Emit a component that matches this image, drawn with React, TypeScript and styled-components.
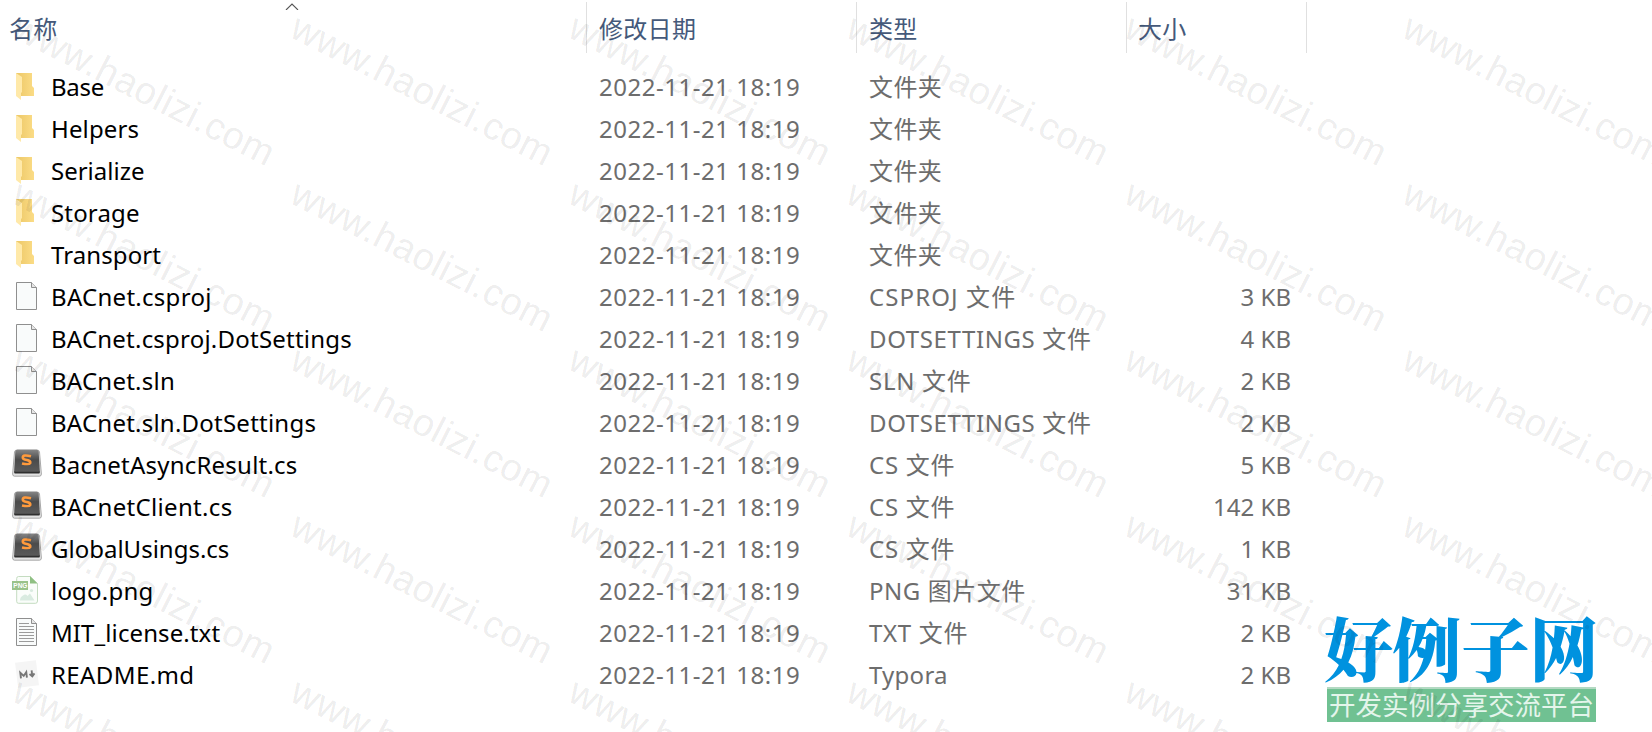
import React from "react";
import styled, { createGlobalStyle } from "styled-components";

type Kind = "folder" | "blank" | "sublime" | "png" | "txt" | "md";

type FileItem = {
  name: string;
  kind: Kind;
  type: string;
  size?: string;
  spacing?: number;
  typeSpacing?: number;
};

const DATE = "2022-11-21 18:19";

const FILES: FileItem[] = [
  { name: "Base", kind: "folder", type: "文件夹", spacing: -0.25, typeSpacing: 0.4 },
  { name: "Helpers", kind: "folder", type: "文件夹", spacing: 0.15, typeSpacing: 0.4 },
  { name: "Serialize", kind: "folder", type: "文件夹", typeSpacing: 0.4 },
  { name: "Storage", kind: "folder", type: "文件夹", spacing: 0.15, typeSpacing: 0.4 },
  { name: "Transport", kind: "folder", type: "文件夹", spacing: 0.1, typeSpacing: 0.4 },
  { name: "BACnet.csproj", kind: "blank", type: "CSPROJ 文件", size: "3 KB", spacing: 0.28, typeSpacing: 1.1 },
  { name: "BACnet.csproj.DotSettings", kind: "blank", type: "DOTSETTINGS 文件", size: "4 KB", spacing: 0.22, typeSpacing: 0.62 },
  { name: "BACnet.sln", kind: "blank", type: "SLN 文件", size: "2 KB", spacing: 0.24, typeSpacing: 0.7 },
  { name: "BACnet.sln.DotSettings", kind: "blank", type: "DOTSETTINGS 文件", size: "2 KB", spacing: 0.23, typeSpacing: 0.62 },
  { name: "BacnetAsyncResult.cs", kind: "sublime", type: "CS 文件", size: "5 KB", spacing: 0.22, typeSpacing: 0.75 },
  { name: "BACnetClient.cs", kind: "sublime", type: "CS 文件", size: "142 KB", spacing: 0.32, typeSpacing: 0.75 },
  { name: "GlobalUsings.cs", kind: "sublime", type: "CS 文件", size: "1 KB", typeSpacing: 0.75 },
  { name: "logo.png", kind: "png", type: "PNG 图片文件", size: "31 KB", spacing: 0.2, typeSpacing: 0.55 },
  { name: "MIT_license.txt", kind: "txt", type: "TXT 文件", size: "2 KB", spacing: 0.1, typeSpacing: 0.7 },
  { name: "README.md", kind: "md", type: "Typora", size: "2 KB", spacing: 0.4, typeSpacing: 0.25 },
];

// watermark tiles: 6 columns x 5 rows
const TILES = Array.from({ length: 30 }, (_, i) => i);

export default function App() {
  return (
    <Window>
      <GlobalStyle />
      <Header>
        <HeadCell $left={9}>
          名称
          <SortArrow width="14" height="8" viewBox="0 0 14 8">
            <path d="M1 8 L7 2 L13 8" fill="none" stroke="#555" strokeWidth="1.1" />
          </SortArrow>
        </HeadCell>
        <HeadCell $left={13}>修改日期</HeadCell>
        <HeadCell $left={13}>类型</HeadCell>
        <HeadCell $left={12}>大小</HeadCell>
      </Header>
      <List>
        {FILES.map((file) => (
          <Row key={file.name}>
            <NameCell>
              <IconBox>
                <FileIcon kind={file.kind} />
              </IconBox>
              <Name $spacing={file.spacing ?? 0}>{file.name}</Name>
            </NameCell>
            <Cell $spacing={0.53}>{DATE}</Cell>
            <Cell $spacing={file.typeSpacing ?? 0}>{file.type}</Cell>
            <SizeCell>{file.size}</SizeCell>
          </Row>
        ))}
      </List>
      <SiteLogo>
        <LogoTitle>好例子网</LogoTitle>
        <LogoBar>开发实例分享交流平台</LogoBar>
      </SiteLogo>
      <Watermark>
        {TILES.map((i) => (
          <Tile key={i}>
            <Mark>www.haolizi.com</Mark>
          </Tile>
        ))}
      </Watermark>
    </Window>
  );
}

function FileIcon({ kind }: { kind: Kind }) {
  switch (kind) {
    case "folder":
      return (
        <svg width="30" height="30" viewBox="0 0 30 30">
          <defs>
            <linearGradient id="folderBack" x1="0" x2="1">
              <stop offset="0" stopColor="#ecc766" />
              <stop offset="1" stopColor="#fbdc86" />
            </linearGradient>
          </defs>
          <path d="M4 2H20V15L22 17V25H4Z" fill="url(#folderBack)" />
          <path d="M4 2L10 6V21L9 22V29L4 25Z" fill="#ffe9a9" />
        </svg>
      );
    case "blank":
    case "txt":
      return (
        <svg width="30" height="30" viewBox="0 0 30 30">
          <path d="M4.5 1.5H19.5L24.5 6.5V28.5H4.5Z" fill="#f9fbfb" stroke="#8f8f8f" />
          <path d="M19.5 1.5V6.5H24.5" fill="#e6e6e6" stroke="#8f8f8f" />
          {kind === "txt" && (
            <path
              d="M7 6.5H17M7 9.5H22M7 12.5H22M7 15.5H22M7 18.5H22M7 21.5H22M7 24.5H22"
              stroke="#9b9b9b"
            />
          )}
        </svg>
      );
    case "sublime":
      return (
        <svg width="30" height="30" viewBox="0 0 30 30">
          <defs>
            <linearGradient id="keyCap" x1="0" x2="0" y1="0" y2="1">
              <stop offset="0" stopColor="#858585" />
              <stop offset="0.45" stopColor="#4b4b4b" />
              <stop offset="1" stopColor="#5a5a5a" />
            </linearGradient>
          </defs>
          <path
            d="M2.5 3Q2.8 1 5 1H25Q27.2 1 27.5 3L29.4 25Q29.4 27.2 27.5 27.2H2.5Q.6 27.2 .6 25Z"
            fill="#e2e2e2"
            stroke="#969696"
            strokeWidth=".8"
          />
          <path d="M2.2 22H27.8V23.4Q27.800 24.600 26 24.600H4Q2.200 24.600 2.200 23.400Z" fill="#2f2f2f" />
          <path d="M3.300 2.600Q3.500.800 5.300.800H24.700Q26.500.800 26.700 2.600L27.800 21.500Q27.800 22.800 26 22.800H4Q2.200 22.800 2.200 21.500Z" fill="url(#keyCap)" />
          <path
            d="M19 7.300Q10.800 5.300 10.800 8.400Q10.800 10.400 14.800 11Q18.800 11.800 18.300 13.900Q17.300 16 10 14.400"
            fill="none"
            stroke="#ff9a3c"
            strokeWidth="2.600"
          />
        </svg>
      );
    case "png":
      return (
        <svg width="30" height="30" viewBox="0 0 30 30">
          <path d="M6.500 1.500H18L25.500 8.500V26Q25.500 28.300 23.500 28.300H6.500Q4.700 28.300 4.700 26.500V3.500Q4.700 1.500 6.500 1.500Z" fill="#fafdfa" stroke="#c4dcc0" />
          <path d="M18 1L25.500 8.500H18Z" fill="#8fc083" />
          <path d="M8 25.500Q8 22 11 20.500Q13.500 18.500 15.500 21L18 18.500L22.500 25.500Z" fill="#d9ebe0" />
          <circle cx="19.500" cy="15.500" r="1.600" fill="#d9ebe0" />
          <rect y="6" width="16" height="9" fill="#9ac28a" />
          <PngText x="1.300" y="13">PNG</PngText>
        </svg>
      );
    case "md":
      return (
        <svg width="30" height="30" viewBox="0 0 30 30">
          <g transform="rotate(-7 15 15)">
            <rect x="4.500" y="2.500" width="21" height="25" fill="#f5f5f5" />
            <path d="M8.500 18.500V13L11.500 16.500L14.500 13V18.500" fill="none" stroke="#777" strokeWidth="1.900" />
            <path d="M20 12V17.500M17.500 15.300L20 18L22.500 15.300" fill="none" stroke="#777" strokeWidth="1.900" />
          </g>
        </svg>
      );
  }
}

const GlobalStyle = createGlobalStyle`
  body {
    margin: 0;
    background: #fff;
  }
`;

const COLUMNS = "586px 270px 270px 181px";

const Window = styled.div`
  position: relative;
  width: 1652px;
  height: 732px;
  overflow: hidden;
  background: #fff;
  font-family: "Noto Sans", "Noto Sans CJK SC", sans-serif;
  font-size: 24px;
  line-height: 42px;
  white-space: pre;
`;

const Header = styled.div`
  display: grid;
  grid-template-columns: 586px 270px 270px 180px;
  height: 53px;
  padding-top: 2px;
  box-sizing: border-box;
  margin-bottom: 13px;
`;

const HeadCell = styled.div<{ $left: number }>`
  position: relative;
  height: 51px;
  padding-left: ${(p) => p.$left}px;
  box-sizing: border-box;
  border-right: 1px solid #e0e0e0;
  margin-right: -1px;
  line-height: 53px;
  letter-spacing: 0.3px;
  color: #45597a;
`;

const SortArrow = styled.svg`
  position: absolute;
  top: 0;
  left: 285px;
`;

const List = styled.div`
  display: flex;
  flex-direction: column;
`;

const Row = styled.div`
  display: grid;
  grid-template-columns: ${COLUMNS};
  height: 42px;
`;

const NameCell = styled.div`
  display: flex;
  padding-left: 12px;
`;

const IconBox = styled.div`
  display: flex;
  align-items: center;
  width: 39px;
  height: 38px;
  padding-top: 1px;

  svg {
    display: block;
  }
`;

const Name = styled.span<{ $spacing: number }>`
  color: #000;
  letter-spacing: ${(p) => p.$spacing}px;
`;

const Cell = styled.div<{ $spacing: number }>`
  padding-left: 13px;
  color: #6d6d6d;
  letter-spacing: ${(p) => p.$spacing}px;
`;

const SizeCell = styled.div`
  padding-right: 16px;
  text-align: right;
  color: #6d6d6d;
`;

const PngText = styled.text`
  font: 700 6.5px "Liberation Sans", sans-serif;
  fill: #fff;
`;

const SiteLogo = styled.div`
  position: absolute;
  left: 1327px;
  top: 613px;
  width: 269px;
`;

const LogoTitle = styled.div`
  height: 74px;
  margin-left: -3px;
  font-family: "Noto Serif CJK SC", "Noto Sans CJK SC", serif;
  font-size: 69px;
  font-weight: 900;
  line-height: 68px;
  letter-spacing: -0.5px;
  color: #0092df;
`;

const LogoBar = styled.div`
  height: 35px;
  box-sizing: border-box;
  border-top: 2px solid #b3d9c2;
  background: #70c192;
  text-align: center;
  font-family: "Noto Sans CJK SC", sans-serif;
  font-size: 26.5px;
  line-height: 29px;
  color: #e4f5eb;
`;

const Watermark = styled.div`
  position: absolute;
  left: 10px;
  top: 4px;
  display: grid;
  grid-template-columns: repeat(6, 278px);
  grid-auto-rows: 166px;
  pointer-events: none;
`;

const Tile = styled.div`
  width: 278px;
  height: 166px;
`;

const Mark = styled.div`
  width: max-content;
  transform: rotate(27deg);
  transform-origin: 0 32px;
  font-family: "Liberation Sans", Arial, sans-serif;
  font-size: 38px;
  line-height: 38px;
  letter-spacing: 0.5px;
  color: rgba(0, 0, 0, 0.085);
`;
